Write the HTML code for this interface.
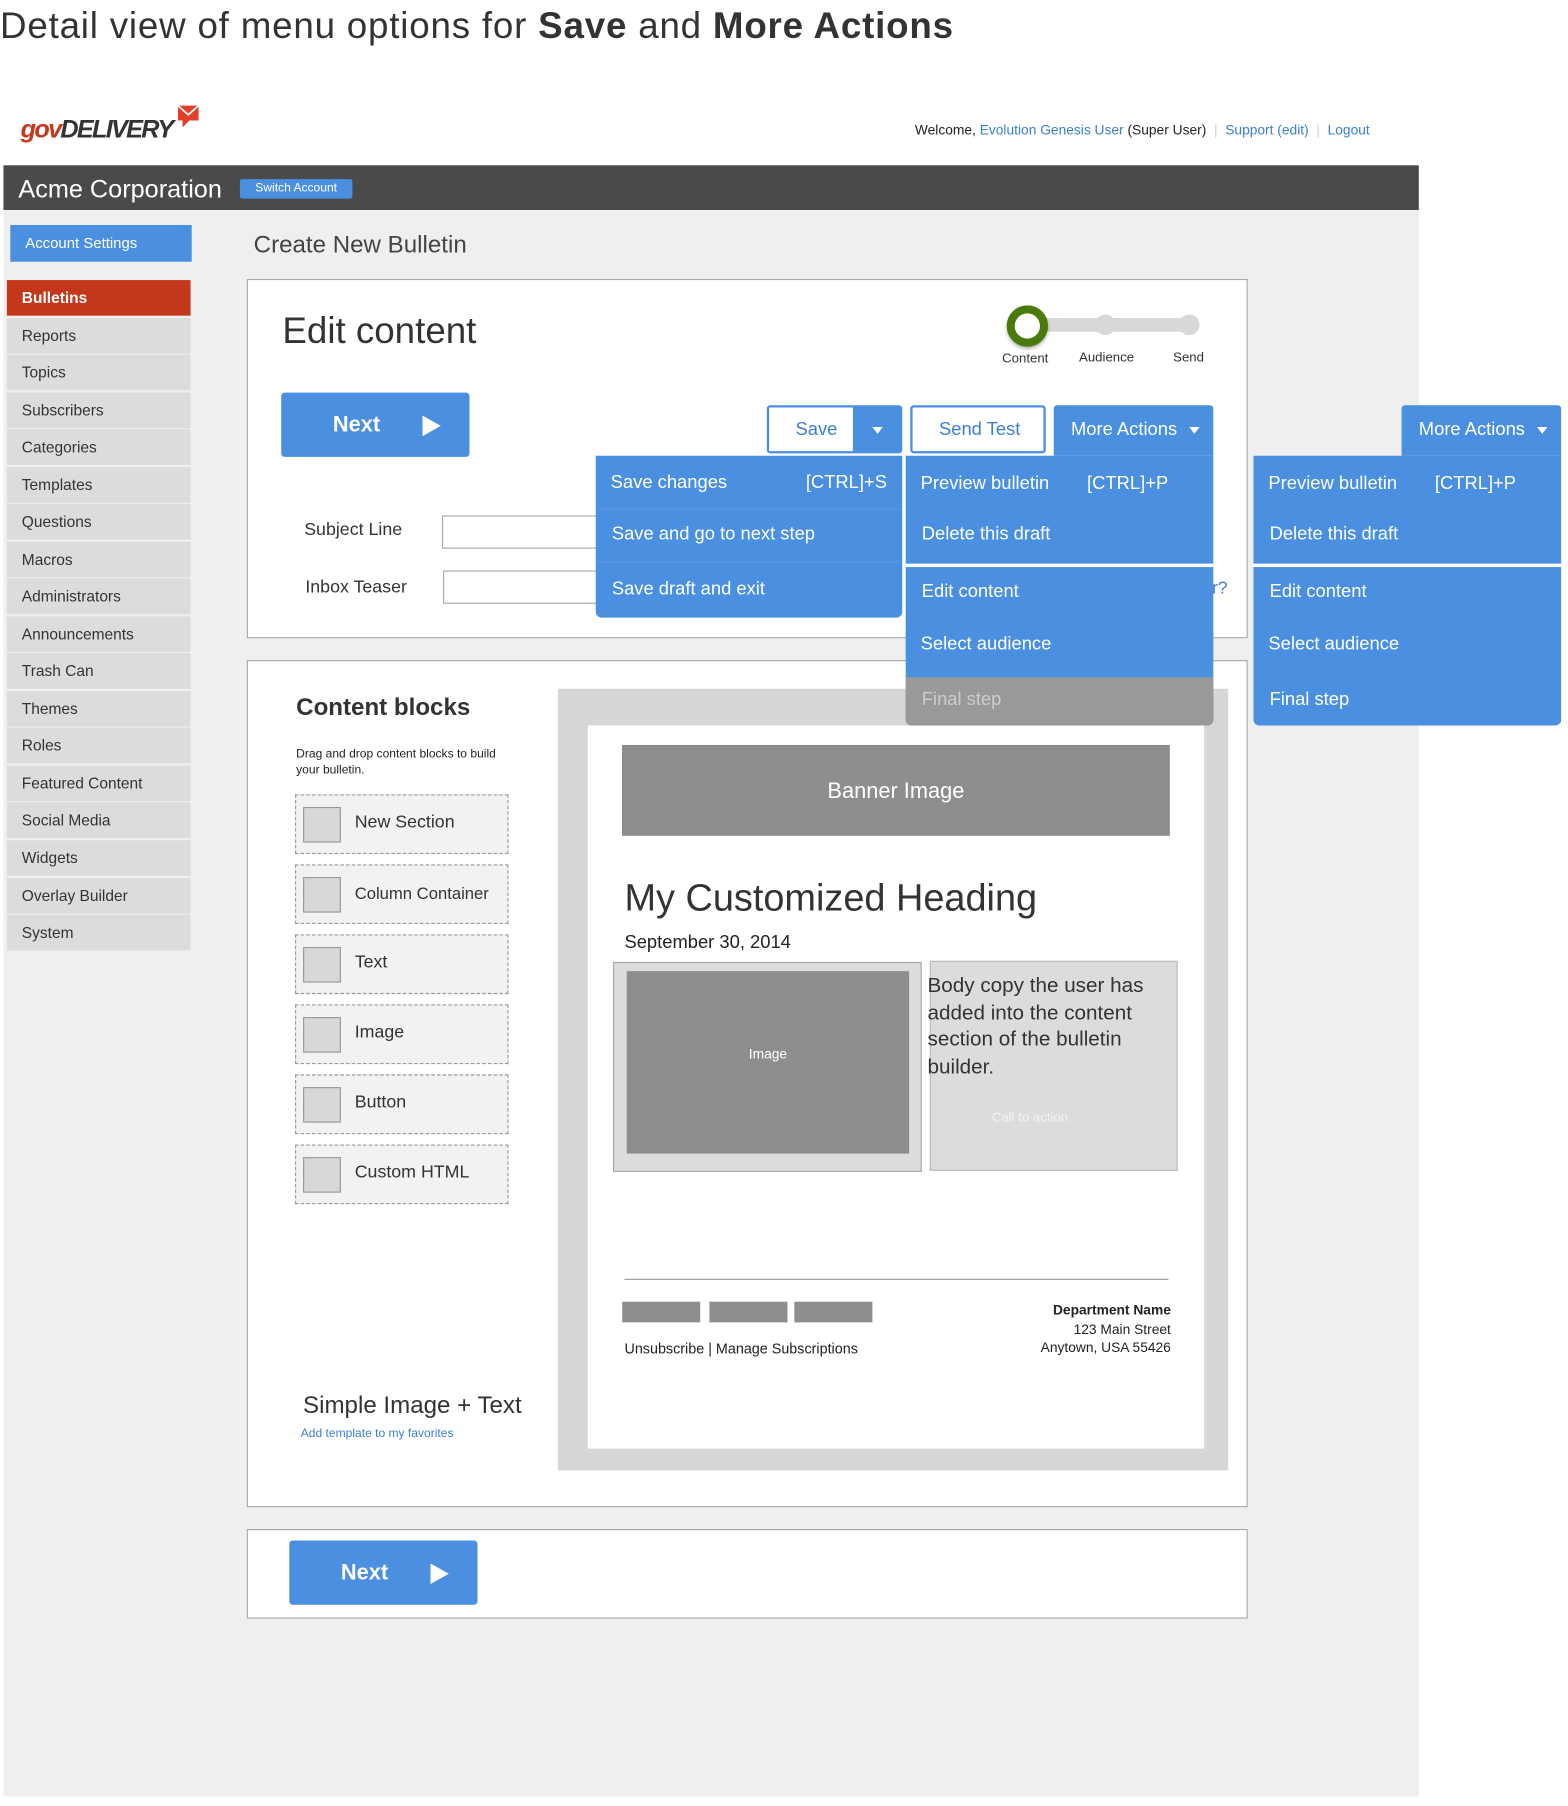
<!DOCTYPE html>
<html><head><meta charset="utf-8"><style>
*{margin:0;padding:0;box-sizing:border-box}
html,body{width:1568px;height:1806px;overflow:hidden;background:#fff;font-family:"Liberation Sans",sans-serif;color:#333}
#w{position:absolute;left:0;top:0;width:1366px;height:1573px;transform:scale(1.1479);transform-origin:0 0}
.a{position:absolute;white-space:nowrap}
.blue{background:#4a8fe0;color:#fff}
.side{position:absolute;left:6px;width:160px;height:31px;background:#dcdcdc;font-size:13.5px;padding-left:13px;line-height:31px;color:#333}
.blk{position:absolute;left:257px;width:186px;height:52px;border:1.5px dashed #999;background:#f2f2f2}
.blk i{position:absolute;left:6px;top:10px;width:33px;height:31px;background:#d8d8d8;border:1px solid #999}
.blk span{position:absolute;left:51px;top:15px;font-size:15.5px;color:#333}
.mi{position:absolute;font-size:16px;color:#fff}
</style></head><body><div id="w">
<div class="a" style="left:0;top:4px;font-size:32px;color:#333;letter-spacing:0.7px">Detail view of menu options for <b>Save</b> and <b>More Actions</b></div>

<div class="a" style="left:18px;top:100px;font-size:22px;font-weight:bold;font-style:italic;letter-spacing:-1.5px"><span style="color:#c4371a">gov</span><span style="color:#333">DELIVERY</span></div>
<svg class="a" style="left:153px;top:90px" width="22" height="22"><path d="M2 2h18v13h-8l-6 6v-6H2z" fill="#e0402a"/><path d="M2 2l9 8 9-8" stroke="#fff" stroke-width="1.5" fill="none"/></svg>
<div class="a" style="left:797px;top:106px;font-size:12px;color:#222">Welcome, <span style="color:#3a7fd0">Evolution Genesis User</span> (Super User) <span style="color:#ccc">&nbsp;|&nbsp;</span> <span style="color:#3a7fd0">Support (edit)</span> <span style="color:#ccc">&nbsp;|&nbsp;</span> <span style="color:#3a7fd0">Logout</span></div>

<div class="a" style="left:3px;top:144px;width:1233px;height:39px;background:#4a4a4a"></div>
<div class="a" style="left:16px;top:152px;font-size:22px;color:#fff">Acme Corporation</div>
<div class="a blue" style="left:209px;top:156px;width:98px;height:17px;font-size:10.5px;line-height:17px;text-align:center;border-radius:2px">Switch Account</div>
<div class="a" style="left:3px;top:183px;width:1233px;height:1382px;background:#efefef"></div>

<div class="a blue" style="left:9px;top:196px;width:158px;height:32px;font-size:13px;line-height:32px;padding-left:13px">Account Settings</div>
<div class="side" style="top:244px;background:#c4371a;color:#fff;font-weight:bold">Bulletins</div>
<div class="side" style="top:277px">Reports</div>
<div class="side" style="top:309px">Topics</div>
<div class="side" style="top:342px">Subscribers</div>
<div class="side" style="top:374px">Categories</div>
<div class="side" style="top:407px">Templates</div>
<div class="side" style="top:439px">Questions</div>
<div class="side" style="top:472px">Macros</div>
<div class="side" style="top:504px">Administrators</div>
<div class="side" style="top:537px">Announcements</div>
<div class="side" style="top:569px">Trash Can</div>
<div class="side" style="top:602px">Themes</div>
<div class="side" style="top:634px">Roles</div>
<div class="side" style="top:667px">Featured Content</div>
<div class="side" style="top:699px">Social Media</div>
<div class="side" style="top:732px">Widgets</div>
<div class="side" style="top:765px">Overlay Builder</div>
<div class="side" style="top:797px">System</div>

<div class="a" style="left:221px;top:202px;font-size:21px;color:#444">Create New Bulletin</div>

<!-- panel 1 -->
<div class="a" style="left:215px;top:243px;width:872px;height:313px;background:#fff;border:1px solid #aaa"></div>
<div class="a" style="left:246px;top:270px;font-size:32px;color:#333">Edit content</div>
<div class="a" style="left:894px;top:277px;width:142px;height:12px;background:#d8d8d8;border-radius:6px"></div>
<div class="a" style="left:954px;top:274px;width:18px;height:18px;background:#d8d8d8;border-radius:50%"></div>
<div class="a" style="left:1027px;top:274px;width:18px;height:18px;background:#d8d8d8;border-radius:50%"></div>
<div class="a" style="left:877px;top:266px;width:36px;height:36px;border:7px solid #4a7a0a;background:#fff;border-radius:50%;box-shadow:0 2px 3px rgba(0,0,0,.3)"></div>
<div class="a" style="left:873px;top:307px;font-size:11.5px">Content</div>
<div class="a" style="left:940px;top:306px;font-size:11.5px">Audience</div>
<div class="a" style="left:1022px;top:306px;font-size:11.5px">Send</div>

<div class="a blue" style="left:245px;top:342px;width:164px;height:56px;border-radius:3px"><span class="a" style="left:45px;top:18px;font-size:19px;font-weight:bold">Next</span><svg class="a" style="left:123px;top:20px" width="16" height="18"><path d="M0 0L16 9L0 18z" fill="#fff"/></svg></div>

<div class="a" style="left:265px;top:453px;font-size:15.5px">Subject Line</div>
<div class="a" style="left:385px;top:449px;width:140px;height:29px;border:1px solid #aaa"></div>
<div class="a" style="left:266px;top:503px;font-size:15.5px">Inbox Teaser</div>
<div class="a" style="left:386px;top:497px;width:140px;height:29px;border:1px solid #aaa"></div>
<div class="a" style="left:1056px;top:504px;font-size:15px;color:#3a7fd0">r?</div>

<div class="a" style="left:668px;top:353px;width:118px;height:42px;background:#4a8fe0;border-radius:3px"></div>
<div class="a" style="left:670px;top:355px;width:73px;height:38px;background:#fff"></div>
<div class="a" style="left:693px;top:366px;font-size:16px;color:#3a7fd0">Save</div>
<svg class="a" style="left:760px;top:372px" width="9" height="6"><path d="M0 0h9L4.5 6z" fill="#fff"/></svg>
<div class="a" style="left:793px;top:353px;width:118px;height:42px;border:2px solid #4a8fe0;background:#fff;border-radius:3px"></div>
<div class="a" style="left:818px;top:366px;font-size:16px;color:#3a7fd0">Send Test</div>
<div class="a blue" style="left:918px;top:353px;width:139px;height:44px;border-radius:3px 3px 0 0"><span class="a" style="left:15px;top:13px;font-size:16px">More Actions</span><svg class="a" style="left:118px;top:19px" width="9" height="6"><path d="M0 0h9L4.5 6z" fill="#fff"/></svg></div>
<div class="a blue" style="left:1221px;top:353px;width:139px;height:44px;border-radius:3px 3px 0 0"><span class="a" style="left:15px;top:13px;font-size:16px">More Actions</span><svg class="a" style="left:118px;top:19px" width="9" height="6"><path d="M0 0h9L4.5 6z" fill="#fff"/></svg></div>

<!-- panel 2 -->
<div class="a" style="left:215px;top:575px;width:872px;height:738px;background:#fff;border:1px solid #aaa"></div>
<div class="a" style="left:258px;top:605px;font-size:21px;font-weight:bold;color:#333">Content blocks</div>
<div class="a" style="left:258px;top:650px;font-size:10.5px;line-height:14px;color:#222">Drag and drop content blocks to build<br>your bulletin.</div>
<div class="blk" style="top:692px"><i></i><span>New Section</span></div>
<div class="blk" style="top:753px"><i></i><span style="font-size:14.5px;top:17px">Column Container</span></div>
<div class="blk" style="top:814px"><i></i><span>Text</span></div>
<div class="blk" style="top:875px"><i></i><span>Image</span></div>
<div class="blk" style="top:936px"><i></i><span>Button</span></div>
<div class="blk" style="top:997px"><i></i><span>Custom HTML</span></div>
<div class="a" style="left:264px;top:1213px;font-size:21px;color:#333">Simple Image + Text</div>
<div class="a" style="left:262px;top:1243px;font-size:10.5px;color:#3a7fd0">Add template to my favorites</div>

<div class="a" style="left:486px;top:600px;width:584px;height:681px;background:#d6d6d6"></div>
<div class="a" style="left:512px;top:632px;width:537px;height:630px;background:#fff"></div>
<div class="a" style="left:542px;top:649px;width:477px;height:79px;background:#8e8e8e;border:1px solid #888;color:#fff;font-size:19px;text-align:center;line-height:80px">Banner Image</div>
<div class="a" style="left:544px;top:763px;font-size:33px;color:#333">My Customized Heading</div>
<div class="a" style="left:544px;top:813px;font-size:16px;color:#222">September 30, 2014</div>
<div class="a" style="left:534px;top:838px;width:269px;height:183px;background:#dcdcdc;border:1px solid #aaa"></div>
<div class="a" style="left:546px;top:846px;width:246px;height:159px;background:#8e8e8e;color:#fff;font-size:12px;text-align:center;line-height:144px">Image</div>
<div class="a" style="left:810px;top:837px;width:216px;height:183px;background:#dcdcdc;border:1px solid #bbb"></div>
<div class="a" style="left:808px;top:847px;font-size:18px;line-height:23.5px;color:#333">Body copy the user has<br>added into the content<br>section of the bulletin<br>builder.</div>
<div class="a" style="left:864px;top:968px;font-size:11.5px;color:#f4f4f4">Call to action</div>
<div class="a" style="left:544px;top:1114px;width:474px;height:1px;background:#999"></div>
<div class="a" style="left:542px;top:1134px;width:68px;height:18px;background:#8e8e8e"></div>
<div class="a" style="left:618px;top:1134px;width:68px;height:18px;background:#8e8e8e"></div>
<div class="a" style="left:692px;top:1134px;width:68px;height:18px;background:#8e8e8e"></div>
<div class="a" style="left:544px;top:1168px;font-size:12.5px;color:#222">Unsubscribe | Manage Subscriptions</div>
<div class="a" style="left:860px;top:1133px;width:160px;text-align:right;font-size:12px;line-height:16.5px;color:#222"><b>Department Name</b><br>123 Main Street<br>Anytown, USA 55426</div>

<!-- dropdowns -->
<div class="a blue" style="left:519px;top:397px;width:267px;height:141px;border-radius:0 0 5px 5px"></div>
<div class="a" style="left:519px;top:443px;width:267px;height:1px;background:#5c9ae6"></div>
<div class="a" style="left:519px;top:489px;width:267px;height:1px;background:#5c9ae6"></div>
<div class="mi" style="left:532px;top:412px">Save changes</div>
<div class="mi" style="left:702px;top:412px">[CTRL]+S</div>
<div class="mi" style="left:533px;top:457px">Save and go to next step</div>
<div class="mi" style="left:533px;top:505px">Save draft and exit</div>

<div class="a blue" style="left:789px;top:397px;width:268px;height:235px;border-radius:0 0 5px 5px;overflow:hidden"><div class="a" style="left:0;top:193px;width:268px;height:42px;background:#999"></div><div class="a" style="left:0;top:94px;width:268px;height:3px;background:#fff"></div></div>
<div class="mi" style="left:802px;top:413px">Preview bulletin</div>
<div class="mi" style="left:947px;top:413px">[CTRL]+P</div>
<div class="mi" style="left:803px;top:457px">Delete this draft</div>
<div class="mi" style="left:803px;top:507px">Edit content</div>
<div class="mi" style="left:802px;top:553px">Select audience</div>
<div class="mi" style="left:803px;top:601px;color:#ccc">Final step</div>

<div class="a blue" style="left:1092px;top:397px;width:268px;height:235px;border-radius:0 0 5px 5px;overflow:hidden"><div class="a" style="left:0;top:94px;width:268px;height:3px;background:#fff"></div></div>
<div class="mi" style="left:1105px;top:413px">Preview bulletin</div>
<div class="mi" style="left:1250px;top:413px">[CTRL]+P</div>
<div class="mi" style="left:1106px;top:457px">Delete this draft</div>
<div class="mi" style="left:1106px;top:507px">Edit content</div>
<div class="mi" style="left:1105px;top:553px">Select audience</div>
<div class="mi" style="left:1106px;top:601px">Final step</div>

<!-- panel 3 -->
<div class="a" style="left:215px;top:1332px;width:872px;height:78px;background:#fff;border:1px solid #aaa"></div>
<div class="a blue" style="left:252px;top:1342px;width:164px;height:56px;border-radius:3px"><span class="a" style="left:45px;top:18px;font-size:19px;font-weight:bold">Next</span><svg class="a" style="left:123px;top:20px" width="16" height="18"><path d="M0 0L16 9L0 18z" fill="#fff"/></svg></div>
</div></body></html>
